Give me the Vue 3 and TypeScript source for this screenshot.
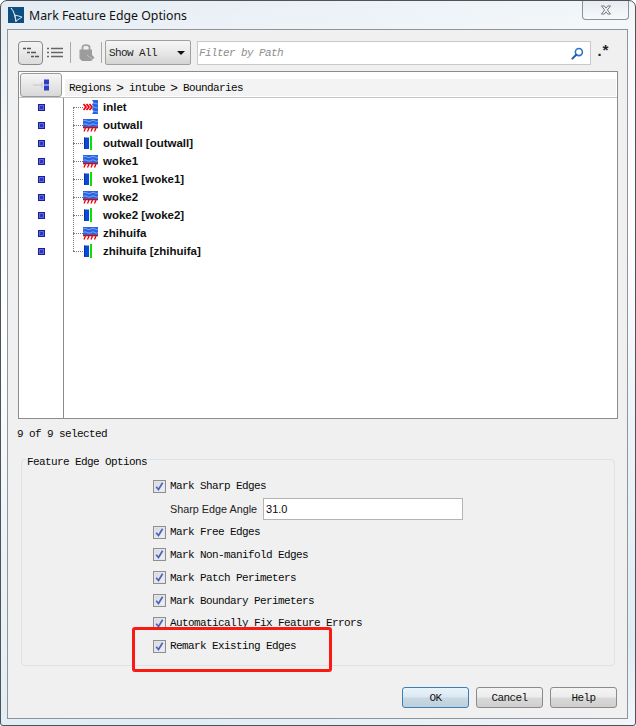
<script setup lang="ts">
type Kind = 'inlet' | 'wall' | 'iface'
interface Row { name: string; kind: Kind }
const rows: Row[] = [
  { name: 'inlet', kind: 'inlet' },
  { name: 'outwall', kind: 'wall' },
  { name: 'outwall [outwall]', kind: 'iface' },
  { name: 'woke1', kind: 'wall' },
  { name: 'woke1 [woke1]', kind: 'iface' },
  { name: 'woke2', kind: 'wall' },
  { name: 'woke2 [woke2]', kind: 'iface' },
  { name: 'zhihuifa', kind: 'wall' },
  { name: 'zhihuifa [zhihuifa]', kind: 'iface' },
]
const options: string[] = [
  'Mark Free Edges',
  'Mark Non-manifold Edges',
  'Mark Patch Perimeters',
  'Mark Boundary Perimeters',
  'Automatically Fix Feature Errors',
  'Remark Existing Edges',
]
</script>

<template>
  <div class="window">
    <header class="titlebar">
      <svg class="logo" viewBox="0 0 16 16" width="16" height="16">
        <rect width="16" height="16" fill="#0f4f7f" />
        <path d="M3 1 C6 4 7 9 8 15" fill="none" stroke="#fff" stroke-width="1" />
        <path d="M7 8 L14 10 L8 14 Z" fill="none" stroke="#cfe2f0" stroke-width="1" />
      </svg>
      <span class="title">Mark Feature Edge Options</span>
      <div class="close">
        <svg viewBox="0 0 13 11" width="12" height="10">
          <path d="M1.5 1 H4.5 L6.5 3.5 L8.5 1 H11.5 L8 5.5 L11.5 10 H8.5 L6.5 7.5 L4.5 10 H1.5 L5 5.5 Z" fill="#f4f6f8" stroke="#6b6f75" stroke-width="1" stroke-linejoin="round" />
        </svg>
      </div>
    </header>

    <main class="content">
      <div class="toolbar">
        <button class="tool active">
          <svg viewBox="0 0 16 12" width="16" height="12">
            <path d="M0 1.5 H3 M4 1.5 H8 M4 5.5 H7 M8 5.5 H13 M8 9.5 H11 M12 9.5 H16" stroke="#555" stroke-width="1.5" fill="none" />
          </svg>
        </button>
        <button class="tool plain">
          <svg viewBox="0 0 16 12" width="16" height="12">
            <path d="M0 1.5 H2 M4 1.5 H16 M0 5.5 H2 M4 5.5 H16 M0 9.5 H2 M4 9.5 H16" stroke="#666" stroke-width="1.6" fill="none" />
          </svg>
        </button>
        <span class="sep sep-a"></span>
        <svg class="lock" viewBox="0 0 16 17" width="16" height="17">
          <path d="M3.5 6 V3 C3.5 0.5 10.5 0.5 10.5 3 V6" fill="none" stroke="#a0a0a0" stroke-width="1.8" />
          <path d="M0.5 5.5 H13 V11 L15.5 13.5 L12 17 H3 L0.5 14.5 Z" fill="#9c9c9c" />
          <path d="M8 11 L13 15" stroke="#c2c2c2" stroke-width="1" />
        </svg>
        <span class="sep sep-b"></span>
        <div class="combo">
          <span>Show All</span>
          <i class="caret"></i>
        </div>
        <div class="filter">
          <span>Filter by Path</span>
          <svg viewBox="0 0 14 14" width="13" height="13">
            <circle cx="8.5" cy="5.5" r="3.8" fill="none" stroke="#2a74c4" stroke-width="1.7" />
            <path d="M5.6 8.4 L1.5 12.5" stroke="#1f5ea8" stroke-width="2.2" stroke-linecap="round" />
          </svg>
        </div>
        <span class="regex">.*</span>
      </div>

      <section class="tree">
        <div class="tree-head">
          <div class="head-btn">
            <svg viewBox="0 0 22 16" width="22" height="16">
              <path d="M2 8 H11 M11 5 V11" stroke="#c4c4c4" stroke-width="1" fill="none" />
              <rect x="13" y="2.5" width="5" height="5" fill="#2b3fc0" />
              <rect x="13" y="8.5" width="5" height="5" fill="#2b3fc0" />
            </svg>
          </div>
          <div class="crumbs">
            <span>Regions</span><b class="gt">&gt;</b><span>intube</span><b class="gt">&gt;</b><span>Boundaries</span>
          </div>
        </div>
        <div class="tree-body">
          <div class="marks">
            <i v-for="r in rows" :key="r.name" class="mark"></i>
          </div>
          <ul class="nodes">
            <li v-for="r in rows" :key="r.name" class="node">
              <span class="dots"></span>
              <svg v-if="r.kind === 'inlet'" class="ico" viewBox="0 0 15 14" width="15" height="14">
                <path d="M0.5 4 L3 7 L0.5 10 M3.5 4 L6 7 L3.5 10 M6.5 4 L9 7 L6.5 10" fill="none" stroke="#f00000" stroke-width="1.7" />
                <path d="M9 0 H15 V14 H9 L10.5 11.5 L9 9 L10.5 7 L9 4.5 L10.5 2.5 Z" fill="#2a63e0" />
                <path d="M10 3 L15 4 M10 7 L15 8 M10 11 L15 12" stroke="#6f9cf0" stroke-width="1" />
              </svg>
              <svg v-else-if="r.kind === 'wall'" class="ico" viewBox="0 0 15 14" width="15" height="14">
                <rect x="0" y="1" width="15" height="8" fill="#2a63e0" />
                <path d="M0 3 Q2 1.5 4 3 T8 3 T12 3 T15 3 M0 6.5 Q2 5 4 6.5 T8 6.5 T12 6.5 T15 6.5" stroke="#7ba6f2" stroke-width="1" fill="none" />
                <rect x="0" y="9" width="15" height="1.3" fill="#e80000" />
                <path d="M2.5 10 L1 13.5 M6 10 L4.5 13.5 M9.5 10 L8 13.5 M13 10 L11.5 13.5" stroke="#e80000" stroke-width="1.3" fill="none" />
              </svg>
              <svg v-else class="ico" viewBox="0 0 15 14" width="15" height="14">
                <rect x="1" y="1.5" width="5" height="11.5" fill="#0a4ad8" />
                <rect x="1" y="1.5" width="1" height="11.5" fill="#07309a" />
                <rect x="7" y="0" width="2" height="14" fill="#0be000" />
              </svg>
              <span class="label">{{ r.name }}</span>
            </li>
          </ul>
        </div>
      </section>

      <p class="status">9 of 9 selected</p>

      <section class="group">
        <span class="legend">Feature Edge Options</span>
        <label class="row">
          <i class="check"><svg viewBox="0 0 9 9" width="9" height="9"><path d="M1.2 4.8 L3.5 7.5 L7.6 0.8" fill="none" stroke="#4a66b4" stroke-width="1.7" /></svg></i>
          <span>Mark Sharp Edges</span>
        </label>
        <div class="row angle">
          <span class="angle-label">Sharp Edge Angle</span>
          <div class="angle-input">31.0</div>
        </div>
        <label v-for="o in options" :key="o" class="row">
          <i class="check"><svg viewBox="0 0 9 9" width="9" height="9"><path d="M1.2 4.8 L3.5 7.5 L7.6 0.8" fill="none" stroke="#4a66b4" stroke-width="1.7" /></svg></i>
          <span>{{ o }}</span>
        </label>
      </section>

      <footer class="actions">
        <button class="btn default">OK</button>
        <button class="btn">Cancel</button>
        <button class="btn">Help</button>
      </footer>
    </main>

    <div class="highlight"></div>
  </div>
</template>

<style>
html, body { margin: 0; padding: 0; background: #fff; }
</style>

<style scoped>
.window {
  position: relative;
  width: 636px;
  height: 726px;
  box-sizing: border-box;
  border: 1px solid #4d5358;
  border-radius: 7px 7px 3px 3px;
  background: linear-gradient(170deg, #e4ecf3 0%, #f6f9fb 18%, #ffffff 40%, #eef4f8 62%, #e0edf4 90%, #f2f6f9 100%);
  display: flex;
  flex-direction: column;
  overflow: hidden;
}
.titlebar {
  height: 28px;
  flex: none;
  display: flex;
  align-items: center;
  padding-left: 7px;
  position: relative;
}
.logo { flex: none; }
.title {
  margin-left: 5px;
  font: 12.3px "Noto Sans", "Open Sans", sans-serif;
  color: #111;
}
.close {
  position: absolute;
  right: 6px;
  top: -1px;
  width: 47px;
  height: 20px;
  box-sizing: border-box;
  border: 1px solid #8c9298;
  border-top: none;
  border-radius: 0 0 4px 4px;
  background: linear-gradient(#e6ebf0, #f7f9fb);
  display: flex;
  align-items: center;
  justify-content: center;
}
.content {
  margin: 0 7px 0 6px;
  height: 690px;
  box-sizing: border-box;
  background: #f0f0f0;
  border: 1px solid #8e9499;
  padding: 10px 9px 0 10px;
  display: flex;
  flex-direction: column;
  font-family: "Liberation Mono", monospace;
  font-size: 11px;
  letter-spacing: -0.6px;
  color: #0a0a0a;
}
.toolbar {
  height: 25px;
  display: flex;
  align-items: center;
  flex: none;
}
.tool {
  border: none;
  padding: 0;
  background: none;
  display: flex;
  align-items: center;
  justify-content: center;
}
.tool.active {
  width: 25px;
  height: 24px;
  border: 1px solid #8a8a8a;
  border-radius: 4px;
  background: linear-gradient(#f4f4f4, #dcdcdc);
  box-sizing: border-box;
}
.tool.plain { width: 16px; height: 24px; margin-left: 4px; }
.sep { width: 1px; height: 21px; background: #a8a8a8; flex: none; }
.sep-a { margin-left: 7px; }
.lock { margin-left: 8px; flex: none; }
.sep-b { margin-left: 6px; }
.combo {
  margin-left: 3px;
  width: 86px;
  height: 25px;
  box-sizing: border-box;
  border: 1px solid #a0a0a0;
  border-radius: 2px;
  background: linear-gradient(#f6f6f6 0%, #e8e8e8 50%, #d4d4d4 100%);
  display: flex;
  align-items: center;
  justify-content: space-between;
  padding: 1px 3px 0 3px;
  color: #222;
}
.caret {
  width: 0;
  height: 0;
  border-left: 4px solid transparent;
  border-right: 4px solid transparent;
  border-top: 4px solid #111;
  margin-right: 2px;
}
.filter {
  margin-left: 6px;
  width: 394px;
  height: 24px;
  box-sizing: border-box;
  background: #fff;
  border: 1px solid #c9c9c9;
  display: flex;
  align-items: center;
  justify-content: space-between;
  padding: 1px 6px 0 1px;
  color: #8d8d8d;
  font-style: italic;
}
.regex {
  margin-left: 4px;
  font: bold 15px/1 "Liberation Mono", monospace;
  color: #222;
  letter-spacing: -3px;
}
.tree {
  margin-top: 6px;
  height: 348px;
  flex: none;
  box-sizing: border-box;
  border: 1px solid #8c8c8c;
  background: #fff;
  display: flex;
  flex-direction: column;
}
.tree-head {
  height: 25px;
  flex: none;
  display: flex;
  align-items: center;
}
.head-btn {
  width: 42px;
  height: 24px;
  margin-left: 1px;
  box-sizing: border-box;
  border: 1px solid #9a9a9a;
  border-radius: 3px;
  background: linear-gradient(#f6f6f6, #d8d8d8);
  display: flex;
  align-items: center;
  justify-content: center;
  padding-left: 2px;
}
.crumbs {
  margin-left: 3px;
  flex: 1;
  margin-right: 1px;
  height: 17px;
  align-self: flex-end;
  margin-bottom: 1px;
  background: #f3f3f3;
  display: flex;
  align-items: center;
  padding-left: 4px;
}
.gt {
  width: 18px;
  text-align: center;
  font: normal 13px "Liberation Sans", sans-serif;
  letter-spacing: 0;
}
.tree-body {
  flex: 1;
  display: flex;
  min-height: 0;
  border-top: 1px solid #c4c4c4;
}
.marks {
  width: 45px;
  flex: none;
  box-sizing: border-box;
  border-right: 1px solid #8c8c8c;
  display: flex;
  flex-direction: column;
  align-items: center;
}
.mark {
  display: block;
  width: 7px;
  height: 7px;
  margin: 5.5px 0;
  background: #2f35c0;
  box-shadow: inset 0 0 0 1px #1d1f9a, inset 0 0 0 2px #5c6ad6;
}
.nodes {
  list-style: none;
  margin: 0;
  padding: 0;
  flex: 1;
}
.node {
  height: 18px;
  display: flex;
  align-items: center;
  position: relative;
}
.dots {
  margin-left: 9px;
  width: 10px;
  border-top: 1px dotted #777;
  flex: none;
}
.node::before {
  content: "";
  position: absolute;
  left: 9px;
  top: -9px;
  height: 18px;
  border-left: 1px dotted #777;
}
.node:first-child::before { top: 9px; height: 0; }
.ico { flex: none; }
.label {
  margin-left: 5px;
  font: bold 11.5px "Liberation Sans", Arial, sans-serif;
  letter-spacing: 0;
  color: #111;
}
.status {
  margin: 9px 0 0 -1px;
  line-height: 12px;
  height: 12px;
  flex: none;
}
.group {
  position: relative;
  margin: 19px 3px 0 3px;
  height: 207px;
  flex: none;
  box-sizing: border-box;
  border: 1px solid #dbe2e8;
  border-radius: 4px;
  padding: 15px 0 0 131px;
}
.legend {
  position: absolute;
  left: 4px;
  top: -4px;
  background: #f0f0f0;
  padding: 0 1px;
  line-height: 12px;
}
.row {
  height: 22.857px;
  display: flex;
  align-items: center;
}
.check {
  width: 13px;
  height: 13px;
  box-sizing: border-box;
  border: 1px solid #8f8f8f;
  background: linear-gradient(135deg, #d4d7e0, #f2f3f7);
  box-shadow: inset 0 0 0 1px #e4e4ea;
  margin-right: 4px;
  display: flex;
  align-items: center;
  justify-content: center;
  flex: none;
}
.angle { padding-left: 17px; }
.angle-label {
  font: 10.8px "Liberation Sans", Arial, sans-serif;
  letter-spacing: 0;
  color: #222;
}
.angle-input {
  margin-left: 6px;
  width: 200px;
  height: 22px;
  box-sizing: border-box;
  border: 1px solid #b4b4b4;
  background: #fff;
  font: 11px/20px "Liberation Sans", Arial, sans-serif;
  letter-spacing: 0;
  padding-left: 2px;
}
.actions {
  margin-top: 21px;
  display: flex;
  justify-content: flex-end;
  gap: 7px;
  padding-right: 1px;
  flex: none;
}
.btn {
  width: 67px;
  height: 21px;
  box-sizing: border-box;
  padding: 0;
  border: 1px solid #8b8b8b;
  border-radius: 3px;
  background: linear-gradient(#f4f4f4 0%, #ececec 48%, #d9d9d9 52%, #cfcfcf 100%);
  font: 11px "Liberation Mono", monospace;
  letter-spacing: -0.6px;
  color: #111;
}
.btn.default {
  border-color: #3c7fb1;
  background: linear-gradient(#e8f4fb 0%, #dbe8f1 48%, #c8d8e4 52%, #bfd0dc 100%);
}
.highlight {
  position: absolute;
  left: 131px;
  top: 626px;
  width: 200px;
  height: 45px;
  box-sizing: border-box;
  border: 3px solid #fb1a12;
  border-radius: 3px;
  pointer-events: none;
}
</style>
